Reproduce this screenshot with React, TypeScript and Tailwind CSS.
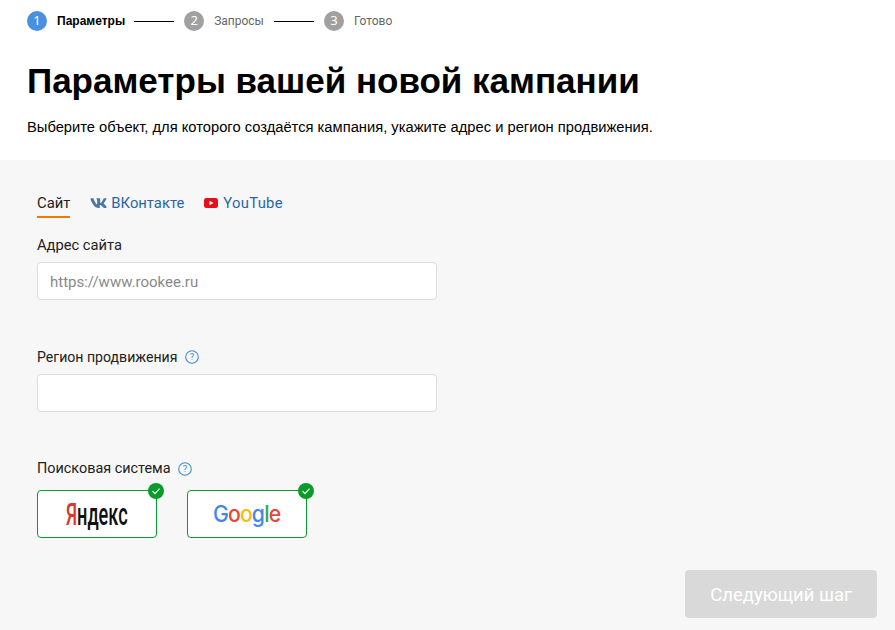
import React from "react";

const roboto = "font-['Roboto','Liberation_Sans',sans-serif]";

function Step({ n, label, active }: { n: number; label: string; active?: boolean }) {
  return (
    <div className="flex items-center">
      <div className={`w-5 h-5 rounded-full flex items-center justify-center text-white text-[13px] ${active ? "bg-[#4a90e2]" : "bg-[#a0a0a0]"}`}>{n}</div>
      <span className={`ml-[10px] text-xs ${active ? "font-bold text-black font-['Liberation_Sans',sans-serif]" : "text-[#666] " + roboto}`}>{label}</span>
    </div>
  );
}

function Help({ tight }: { tight?: boolean }) {
  return (
    <svg width="14" height="14" viewBox="0 0 14 14" className={tight ? "ml-[7px]" : "ml-2"}>
      <circle cx="7" cy="7" r="6.3" fill="none" stroke="#3f8fc9" strokeWidth="1.1" />
      <text x="7" y="10.2" textAnchor="middle" fontSize="9.5" fill="#3f8fc9" fontFamily="Roboto">?</text>
    </svg>
  );
}

function Check() {
  return (
    <div className="absolute -top-[8px] -right-[8px] w-4 h-4 rounded-full bg-[#0b9a2c] flex items-center justify-center">
      <svg width="10" height="10" viewBox="0 0 10 10"><path d="M1.5 5.2 L4 7.6 L8.5 2.6" fill="none" stroke="#fff" strokeWidth="1.1" /></svg>
    </div>
  );
}

function Field({ placeholder }: { placeholder?: string }) {
  return (
    <div className={`w-[400px] h-[38px] mt-[7px] pt-[2px] bg-white border border-[#dcdcdc] rounded-[4px] flex items-center px-3 text-[15px] text-[#8a8a8a] ${roboto}`}>
      {placeholder}
    </div>
  );
}

export default function App() {
  return (
    <div className="w-[895px] h-[630px] overflow-hidden flex flex-col bg-[#f7f7f7]">
      <header className="bg-white h-[160px] px-[27px] pt-[11px] shrink-0">
        <div className="flex items-center h-5">
          <Step n={1} label="Параметры" active />
          <div className="w-10 h-px bg-black ml-[9px] mr-[10px]" />
          <Step n={2} label="Запросы" />
          <div className="w-10 h-px bg-black mx-[10px]" />
          <Step n={3} label="Готово" />
        </div>
        <h1 className="mt-[28px] text-[35px] leading-[44px] font-bold text-black font-['Liberation_Sans',sans-serif]">Параметры вашей новой кампании</h1>
        <p className="mt-[14px] text-[14.72px] leading-5 text-black font-['Liberation_Sans',sans-serif]">Выберите объект, для которого создаётся кампания, укажите адрес и регион продвижения.</p>
      </header>
      <main className={`relative flex-1 pl-[37px] pt-[32px] ${roboto}`}>
        <div className="flex items-start text-[14.8px] h-[26px]">
          <div className="text-[#222] h-[26px] leading-[22px] border-b-2 border-[#ee7a00]">Сайт</div>
          <div className="ml-5 flex items-center h-[22px] text-[#2a66a5]">
            <svg width="17" height="10" viewBox="0 0 17 10" className="mr-1">
              <path d="M16.6 1c.1-.4 0-.7-.5-.7h-1.800c-.5 0-.7.200-.8.500 0 0-.9 2.300-2.200 3.700-.4.400-.6.600-.8.600-.1 0-.3-.1-.3-.500V1c0-.5-.1-.7-.5-.7H6.900c-.3 0-.5.200-.5.400 0 .5.800.6.800 2v2.900c0 .6-.1.700-.4.700-.6 0-2.100-2.300-3-4.800C3.700.7 3.500.3 3 .3H1.100C.6.300.5.500.5.800c0 .5.600 2.800 2.800 5.900 1.500 2.100 3.500 3.200 5.300 3.200 1.100 0 1.200-.2 1.200-.7V7.600c0-.5.100-.6.500-.6.300 0 .7.100 1.800 1.200 1.200 1.200 1.400 1.700 2.100 1.700h1.800c.5 0 .8-.3.600-.8-.2-.5-.8-1.200-1.500-2-.4-.5-1-1-1.200-1.300-.3-.3-.2-.5 0-.8 0 0 2.200-3 2.400-4z" fill="#4c75a3" />
            </svg>
            ВКонтакте
          </div>
          <div className="ml-5 flex items-center h-[22px] text-[#2a66a5] tracking-[0.3px]">
            <svg width="14" height="10" viewBox="0 0 14 10" className="mr-[5px]">
              <rect width="14" height="10" rx="2.500" fill="#e5101c" />
              <path d="M5.500 2.700 L9.500 5 L5.500 7.300 Z" fill="#fff" />
            </svg>
            YouTube
          </div>
        </div>
        <label className="block mt-[17px] text-[14.7px] leading-5 text-[#222]">Адрес сайта</label>
        <Field placeholder="https://www.rookee.ru" />
        <div className="mt-[47px] flex items-center text-[14.1px] leading-5 text-[#222]">Регион продвижения<Help /></div>
        <Field />
        <div className="mt-[47px] flex items-center text-[14.4px] leading-5 text-[#222]">Поисковая система<Help tight /></div>
        <div className="flex gap-[30px] mt-[11px]">
          <div className="relative w-[120px] h-[48px] bg-white border border-[#0b9a2c] rounded-[4px] flex items-center justify-center">
            <span className="inline-block scale-x-[0.585] text-[31px] leading-none font-medium font-['Roboto',sans-serif] text-[#111]"><span className="text-[#e0352b]">Я</span>ндекс</span>
            <Check />
          </div>
          <div className="relative w-[120px] h-[48px] bg-white border border-[#0b9a2c] rounded-[4px] flex items-center justify-center">
            <span className="inline-block scale-x-[0.92] text-[23px] leading-none font-medium font-['Inter',sans-serif] tracking-[-0.9px]">
              <span className="text-[#4285f4]">G</span><span className="text-[#ea4335]">o</span><span className="text-[#fbbc05]">o</span><span className="text-[#4285f4]">g</span><span className="text-[#34a853]">l</span><span className="text-[#ea4335]">e</span>
            </span>
            <Check />
          </div>
        </div>
        <button className="absolute left-[685px] top-[410px] w-[192px] h-[48px] pt-[4px] rounded-[4px] bg-[#d9d9d9] text-white text-[18.5px]">Следующий шаг</button>
      </main>
    </div>
  );
}
